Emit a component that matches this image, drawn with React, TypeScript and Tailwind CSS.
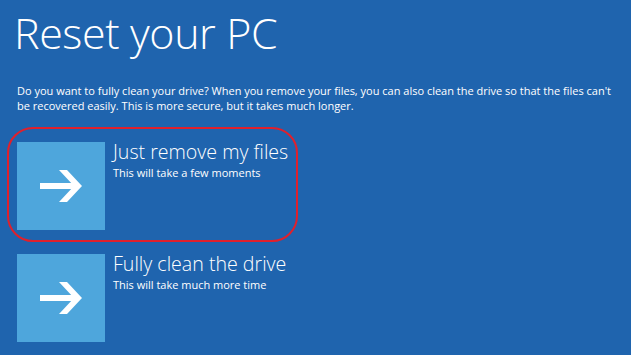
import React from 'react';

type Option = { title: string; sub: string; highlighted?: boolean };

const options: Option[] = [
  { title: 'Just remove my files', sub: 'This will take a few moments', highlighted: true },
  { title: 'Fully clean the drive', sub: 'This will take much more time' },
];

function Arrow() {
  return (
    <svg width="42" height="32" viewBox="0 0 42 32" fill="white">
      <rect x="0" y="13" width="37" height="6" />
      <polygon points="19,0 27,0 42,16 27,32 19,32 34,16" />
    </svg>
  );
}

export default function App() {
  return (
    <div className="w-[631px] h-[355px] overflow-hidden bg-[#1f64ae] text-white pl-[17px] font-['Open_Sans','Noto_Sans',sans-serif]">
      <h1 className="pt-[5px] text-[43px] font-light leading-[56px] tracking-[-0.4px] -ml-[3px]">Reset your PC</h1>

      <p className="mt-[22px] text-[11px] leading-[15px] w-[602px]">
        Do you want to fully clean your drive? When you remove your files, you can also clean the drive so that the files can&apos;t be recovered easily. This is more secure, but it takes much longer.
      </p>

      <div className="mt-[29px] flex flex-col gap-[24px]">
        {options.map(o => (
          <div key={o.title} className="relative flex gap-[8px]">
            {o.highlighted && (
              <div className="absolute -left-[10px] -top-[15px] w-[291px] h-[115px] border-2 border-[#e0202c] rounded-[26px]" />
            )}
            <div className="w-[88px] h-[88px] bg-[#4ea6dc] flex items-center justify-center shrink-0">
              <Arrow />
            </div>
            <div className="flex flex-col">
              <div className="text-[19.6px] font-light leading-[26px] -mt-[3px]">{o.title}</div>
              <div className="text-[11px] leading-[16px]">{o.sub}</div>
            </div>
          </div>
        ))}
      </div>
    </div>
  );
}
